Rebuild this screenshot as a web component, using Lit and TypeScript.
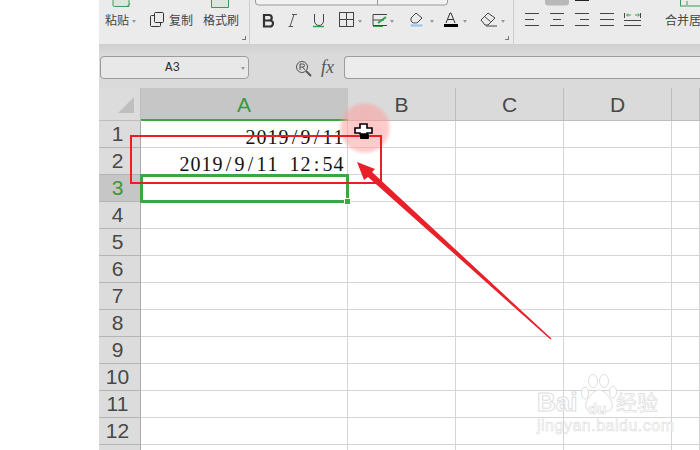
import { LitElement, html, css, svg } from "lit";
import { customElement } from "lit/decorators.js";

const ROWS = [1,2,3,4,5,6,7,8,9,10,11,12,13];
const COLS = ["A","B","C","D",""];
const CELLS: Record<number,string> = { 1:"2019/9/11", 2:"2019/9/11 12:54" };

@customElement("app-root")
export class AppRoot extends LitElement {
  static styles = css`
    :host { display:block; width:700px; height:450px; position:relative; overflow:hidden; background:#fff; font-family:"Liberation Sans","Noto Sans CJK SC",sans-serif; }
    .app { margin-left:99px; width:601px; height:450px; display:flex; flex-direction:column; overflow:hidden; }
    .ribbon { height:44px; background:#ebebeb; display:flex; position:relative; flex:none; overflow:hidden; }
    .g1 { width:150px; border-right:1px solid #cfcfcf; position:relative; flex:none; }
    .g2 { width:263px; border-right:1px solid #cfcfcf; position:relative; flex:none; }
    .g3 { flex:1; position:relative; }
    .rt { position:absolute; font-size:12px; color:#444; top:14px; line-height:14px; white-space:nowrap; }
    .t1 { left:6px; } .t2 { left:70px; } .t3 { left:104px; } .t4 { left:151px; }
    .ic { position:absolute; overflow:visible; }
    .corner { position:absolute; width:3px; height:3px; border-right:1px solid #777; border-bottom:1px solid #777; top:36px; left:255px; }
    .corner.first { left:143px; }
    .caret { position:absolute; width:0; height:0; border:2.5px solid transparent; border-top:3px solid #999; border-bottom:0; top:20px; }
    .caret.first { left:32.5px; }
    .fbar { height:44px; flex:none; background:linear-gradient(#cfcfcf 0,#dadada 10px,#dadada 100%); display:flex; align-items:flex-start; padding:12px 0 0 1px; box-sizing:border-box; }
    .name { width:149px; height:23px; box-sizing:border-box; background:#e8e8e8; border:1px solid #9c9c9c; border-radius:4px; font:12.5px/22px "Liberation Mono",monospace; color:#333; text-align:center; position:relative; padding-right:4px; }
    .name i { position:absolute; right:3px; top:10px; width:0; height:0; border:2.5px solid transparent; border-top:3px solid #999; border-bottom:0; }
    .fns { width:95px; height:23px; flex:none; display:flex; align-items:center; position:relative; }
    .fx { position:absolute; left:72px; top:1px; font:italic 18px/20px "Liberation Serif",serif; color:#555; }
    .input { flex:1; height:23px; box-sizing:border-box; background:#ececec; border:1px solid #9c9c9c; border-right:0; border-radius:4px 0 0 4px; }
    .sheet { flex:1; display:grid; grid-template-columns:42px 207px 108px 108px 108px 28px; grid-template-rows:33px repeat(13,27px); background:#fff; overflow:hidden; }
    .hd { background:#dcdcdc; box-sizing:border-box; border-right:1px solid #bdbdbd; border-bottom:1px solid #bdbdbd; font-size:21px; line-height:33px; text-align:center; color:#484848; }
    .hd.col { background:#dadada; }
    .hd.sel { background:#c6c6c6; color:#3c963c; border-bottom:2px solid #3ea544; border-right:1px solid #c6c6c6; }
    .hd.row { line-height:26px; padding-right:4px; border-bottom:1px solid #b4b4b4; border-right:1px solid #a9a9a9; }
    .hd.row.sel { background:#c6c6c6; color:#3c963c; border-bottom:1px solid #b4b4b4; border-right:1px solid #a9a9a9; }
    .tri { position:relative; }
    .tri svg { position:absolute; left:19px; top:9px; }
    .c { box-sizing:border-box; border-right:1px solid #d4d4d4; border-bottom:1px solid #d4d4d4; font:20px/32px "Liberation Serif",serif; color:#111; display:flex; justify-content:flex-end; padding-right:3px; white-space:nowrap; position:relative; }
    .c span { display:block; width:11px; text-align:center; flex:none; }
    .anchor { position:relative; z-index:1; border:3px solid #3ea544; margin:-1px; background:#fff; }
    .anchor b { position:absolute; right:-5px; bottom:-5px; width:5px; height:5px; background:#3ea544; border:1px solid #fff; }
    .overlay { position:absolute; left:0; top:0; width:700px; height:450px; pointer-events:none; z-index:5; }
    .wm { position:absolute; left:536px; top:378px; width:150px; height:70px; pointer-events:none; z-index:4; }
    .wm span { position:absolute; white-space:nowrap; color:rgba(255,255,255,.95); -webkit-text-stroke:1px #dedede; font-family:"Liberation Sans",sans-serif; }
    .wm .a { left:1px; top:10px; font-size:26px; font-weight:700; line-height:28px; }
    .wm .b { left:52px; top:23px; font-size:15px; font-weight:700; line-height:16px; -webkit-text-stroke:.7px #dedede; }
    .wm .c2 { left:80px; top:10px; font-size:21px; line-height:26px; font-family:"Noto Sans CJK SC",sans-serif; -webkit-text-stroke:.7px #dedede; }
    .wm .d { left:1px; top:39px; font-size:16px; line-height:18px; letter-spacing:.5px; -webkit-text-stroke:.6px #dedede; }
    .wm svg { position:absolute; left:43px; top:-5px; }
    .ic-paste { left:12px; top:0; } .ic-copy { left:51px; top:12px; } .ic-brush { left:111px; top:0; }
    .ic-top { left:5px; top:0; } .ic-font { left:0; top:11px; } .ic-align { left:0; top:0; } .ic-wrap { left:78px; top:0; } .ic-find { left:46px; top:4px; }
  `;

  private icons() {
    return html`
      <svg class="ic ic-paste" width="26" height="9" viewBox="0 0 26 9" fill="none">
        <path d="M2 0v5a1.500 1.500 0 0 0 1.500 1.500H18V0" stroke="#3d9a55" fill="#dce6df"/><path d="M16 6.500l3-3" stroke="#3d9a55"/>
      </svg>
      <svg class="ic ic-copy" width="15" height="15" viewBox="0 0 15 15" fill="none" stroke="#333">
        <rect x="4.500" y=".5" width="9" height="10" rx="1"/><path d="M4 3.500H1.500a1 1 0 0 0-1 1v9a1 1 0 0 0 1 1h8a1 1 0 0 0 1-1V11"/>
      </svg>
      <svg class="ic ic-brush" width="22" height="9" viewBox="0 0 22 9" fill="none">
        <path d="M1.500 0v7.500h17V0" stroke="#3d9a55" fill="#dce6df"/>
      </svg>`;
  }

  private fontIcons() {
    const carets = [107.5,140,179.5,212.5,250.5];
    return html`
      <svg class="ic ic-top" width="200" height="7" viewBox="0 0 200 7" fill="none"><rect x=".5" y="-8" width="192" height="13" rx="3" fill="#f2f2f2" stroke="#999"/><path d="M122.500 0v5" stroke="#999"/></svg>
      <svg class="ic ic-font" width="263" height="20" viewBox="0 0 263 20" fill="none" stroke="#444">
        <path d="M14 4h5a2.700 2.700 0 0 1 0 5.500h-5zM14 9.500h6a3 3 0 0 1 0 6h-6z" stroke="#333" stroke-width="2.200"/>
        <path d="M40 15.500l4-12M38.500 15.500h4.500M42 3.500h5" stroke="#555"/>
        <path d="M64.500 3v7a4.500 4.500 0 0 0 9 0V3" stroke="#444"/><path d="M63 15.500h11" stroke="#2fa44f" stroke-width="1.500"/>
        <rect x="89.500" y="1.500" width="14" height="14"/><path d="M96.500 1.500v14M89.500 8.500h14"/>
        <path d="M137 3.500h-14v11h14M123 9h11"/><path d="M128 12l8-6" stroke="#2fa44f" stroke-width="2"/><path d="M123 15.500h10" stroke="#2fa44f"/>
        <path d="M161 7l5-5 6 5-5 5h-4l-2-2z" stroke="#444"/><rect x="160" y="13" width="13" height="3" fill="#a4c6ea" stroke="#fff" stroke-width=".5"/>
        <path d="M196 12l4-10h1l4 10M198 8.500h5" stroke="#333"/><rect x="194" y="13" width="14" height="3" fill="#000" stroke="none"/>
        <path d="M231 9l7-7 7 5-7 7h-3zM234.500 5.500l6 5M236 15h11" stroke="#444"/>
      </svg>
      ${carets.map(x=>html`<div class="caret" style="left:${x}px"></div>`)}
      <div class="corner"></div>`;
  }

  private alignIcons() {
    return html`
      <svg class="ic ic-align" width="187" height="32" viewBox="0 0 187 32" fill="none" stroke="#444">
        ${svg`<path d="M11 13.500h14M11 19.500h9M11 25.500h14"/>`}
        ${svg`<path d="M36 13.500h14M39 19.500h8M36 25.500h14"/>`}
        ${svg`<path d="M61 13.500h14M66 19.500h9M61 25.500h14"/>`}
        ${svg`<path d="M86 13.500h14M86 19.500h14M86 25.500h14"/>`}
        ${svg`<path d="M110.500 13v5M126.500 13v5M110 20.500h17M110 25.500h17"/>`}
        <path d="M113 15h4M121 15h4M114 13.500l-1.500 1.500 1.500 1.500M124 13.500l1.500 1.500-1.500 1.500" stroke="#2fa44f"/>
        <rect x="31" y="-6" width="24" height="11.500" rx="3" fill="#b8b8b8" stroke="none"/>
        <path d="M61 .5h14" stroke="#222"/>
      </svg>
      <svg class="ic ic-wrap" width="100" height="8" viewBox="0 0 100 8" fill="none" stroke="#3d9a55"><rect x="88.500" y="-6" width="20" height="12"/><path d="M95 1v4"/></svg>
      <span class="rt t4">合并居</span>`;
  }

  private cell(r:number, i:number) {
    if (i===0 && r===3) return html`<b></b>`;
    if (i!==0 || !CELLS[r]) return "";
    return Array.from(CELLS[r]).map(ch=>html`<span>${ch}</span>`);
  }

  render() {
    return html`
      <div class="app">
        <div class="ribbon">
          <div class="g1">
            ${this.icons()}
            <span class="rt t1">粘贴</span>
            <div class="caret first"></div>
            <span class="rt t2">复制</span>
            <span class="rt t3">格式刷</span>
            <div class="corner first"></div>
          </div>
          <div class="g2">${this.fontIcons()}</div>
          <div class="g3">${this.alignIcons()}</div>
        </div>
        <div class="fbar">
          <div class="name">A3<i></i></div>
          <div class="fns">
            <svg class="ic ic-find" width="18" height="17" viewBox="0 0 18 17" fill="none" stroke="#555">
              <circle cx="7" cy="7" r="5.500"/><path d="M11 11l5 5" stroke-width="2"/><path d="M5 10V4h3a1.500 1.500 0 0 1 0 3H5M7.500 7L10 10"/>
            </svg>
            <span class="fx">fx</span>
          </div>
          <div class="input"></div>
        </div>
        <div class="sheet">
          <div class="hd tri"><svg width="16" height="16" viewBox="0 0 16 16"><path d="M16 0v16H0z" fill="#bfbfbf"/></svg></div>
          ${COLS.map((c,i)=>html`<div class="hd col ${i===0?"sel":""}">${c}</div>`)}
          ${ROWS.map(r=>html`
            <div class="hd row ${r===3?"sel":""}">${r===13?"":r}</div>
            ${COLS.map((_,i)=>html`<div class="c ${r===3&&i===0?"anchor":""}">${this.cell(r,i)}</div>`)}
          `)}
        </div>
      </div>
      <div class="wm">
        <svg width="40" height="42" viewBox="0 0 40 42" fill="#fff" stroke="#dedede"><ellipse cx="6" cy="20" rx="3.500" ry="6"/><ellipse cx="14" cy="8" rx="4.500" ry="6.500"/><ellipse cx="25" cy="8" rx="4.500" ry="6.500"/><ellipse cx="34" cy="19" rx="3.500" ry="6"/><path d="M20 17c6 0 15 11 13 18-2 5-8 3-13 3-5 0-11 2-13-3-2-7 7-18 13-18z"/></svg>
        <span class="a">Bai</span><span class="b">du</span><span class="c2">经验</span><span class="d">jingyan.baidu.com</span>
      </div>
      <svg class="overlay" viewBox="0 0 700 450">
        <defs><radialGradient id="halo"><stop offset="0" stop-color="#ff9c9c" stop-opacity=".58"/><stop offset=".82" stop-color="#ff9c9c" stop-opacity=".52"/><stop offset="1" stop-color="#ff9c9c" stop-opacity="0"/></radialGradient></defs>
        <circle cx="365" cy="128" r="27" fill="url(#halo)"/>
        <rect x="131" y="136" width="250" height="47" fill="none" stroke="#ee1c25" stroke-width="2"/>
        <path d="M357 162L375 169L372 172L551.500 338.500L550.500 339.500L368 177L364 180z" fill="#e8202a"/>
        <rect x="360" y="134" width="9" height="5" rx="1" fill="#000"/>
        <path d="M360 124h7v4h5v5h-5v1h-7v-1h-5v-5h5z" fill="#fff" stroke="#000" stroke-width="1.600"/>
      </svg>
    `;
  }
}
